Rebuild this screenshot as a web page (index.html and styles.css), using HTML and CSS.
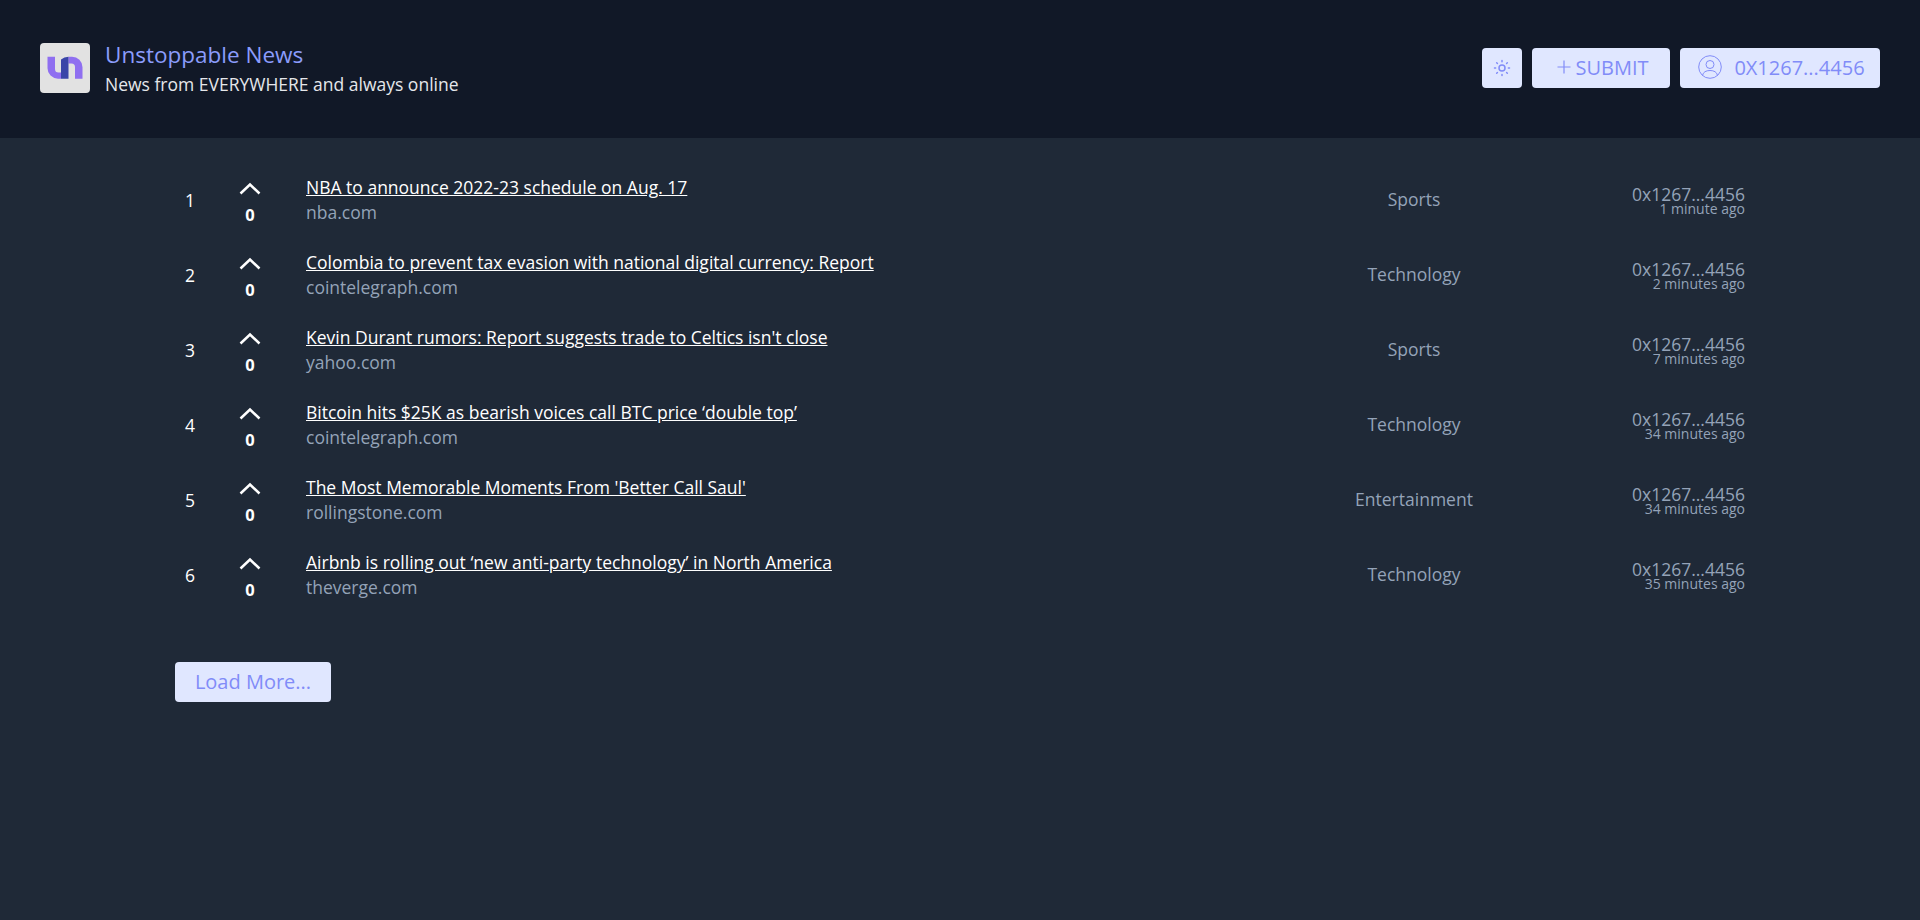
FILE: index.html

```html
<!DOCTYPE html>
<html lang="en">
<head>
	<meta charset="UTF-8" />
	<meta name="viewport" content="width=device-width, initial-scale=1.0" />
	<title>Unstoppable News</title>
	<link rel="stylesheet" href="styles.css">
</head>
<body>
	<!-- Header -->
	<header class="header">
		<div class="brand">
			<div class="logo">
				<svg width="36" height="24" viewBox="0 0 36 24">
					<path d="M.5 .7H8V13a3.500 3.500 0 0 0 3.500 3.500H14v6.200h-3A10.500 10.500 0 0 1 .5 12.200z" fill="#8f6ff0"/>
					<path d="M21.500 .7H25A10.500 10.500 0 0 1 35.500 11.200V22.700H28V11a3.500 3.500 0 0 0-3.500-3.500h-3z" fill="#8f6ff0"/>
					<path d="M14 3.500Q17 .7 21.500 .7V22.700H14z" fill="#3a45a8"/>
				</svg>
			</div>
			<div class="brand-text">
				<h1 class="brand-title">Unstoppable News</h1>
				<p class="brand-sub">News from EVERYWHERE and always online</p>
			</div>
		</div>
		<div class="actions">
			<button class="btn btn-theme" aria-label="Theme">
				<svg width="18" height="18" viewBox="0 0 24 24" fill="none" stroke="currentColor" stroke-width="2" stroke-linecap="round">
					<circle cx="12" cy="12" r="4"/>
					<path d="M12 2v1.500M12 20.500V22M2 12h1.500M20.500 12H22M4.900 4.900l1 1M18.100 18.100l1 1M4.900 19.100l1-1M18.100 5.900l1-1"/>
				</svg>
			</button>
			<button class="btn btn-submit">
				<svg width="16" height="16" viewBox="0 0 16 16" fill="none" stroke="currentColor" stroke-width="1.200"><path d="M8 1.500v13M1.500 8h13"/></svg>
				<span>SUBMIT</span>
			</button>
			<button class="btn btn-user">
				<svg width="24" height="24" viewBox="0 0 24 24" fill="none" stroke="currentColor" stroke-width="1"><circle cx="12" cy="12" r="11.300"/><circle cx="12" cy="9.500" r="4"/><path d="M4.500 20.500c.6-3.500 3.500-5 7.500-5s6.900 1.500 7.500 5"/></svg>
				<span>0X1267...4456</span>
			</button>
		</div>
	</header>
	<!-- End of Header -->

	<main class="content">
		<div class="list">
			<div class="row">
				<div class="rank">1</div>
				<div class="vote"><svg width="22" height="13" viewBox="0 0 22 13" fill="none" stroke="currentColor" stroke-width="2.500"><path d="M1.500 11.500 11 2.500l9.500 9"/></svg><b>0</b></div>
				<div class="story"><a href="#">NBA to announce 2022-23 schedule on Aug. 17</a><span>nba.com</span></div>
				<div class="category">Sports</div>
				<div class="author"><span>0x1267...4456</span><small>1 minute ago</small></div>
			</div>
			<div class="row">
				<div class="rank">2</div>
				<div class="vote"><svg width="22" height="13" viewBox="0 0 22 13" fill="none" stroke="currentColor" stroke-width="2.500"><path d="M1.500 11.500 11 2.500l9.500 9"/></svg><b>0</b></div>
				<div class="story"><a href="#">Colombia to prevent tax evasion with national digital currency: Report</a><span>cointelegraph.com</span></div>
				<div class="category">Technology</div>
				<div class="author"><span>0x1267...4456</span><small>2 minutes ago</small></div>
			</div>
			<div class="row">
				<div class="rank">3</div>
				<div class="vote"><svg width="22" height="13" viewBox="0 0 22 13" fill="none" stroke="currentColor" stroke-width="2.500"><path d="M1.500 11.500 11 2.500l9.500 9"/></svg><b>0</b></div>
				<div class="story"><a href="#">Kevin Durant rumors: Report suggests trade to Celtics isn't close</a><span>yahoo.com</span></div>
				<div class="category">Sports</div>
				<div class="author"><span>0x1267...4456</span><small>7 minutes ago</small></div>
			</div>
			<div class="row">
				<div class="rank">4</div>
				<div class="vote"><svg width="22" height="13" viewBox="0 0 22 13" fill="none" stroke="currentColor" stroke-width="2.500"><path d="M1.500 11.500 11 2.500l9.500 9"/></svg><b>0</b></div>
				<div class="story"><a href="#">Bitcoin hits $25K as bearish voices call BTC price ‘double top’</a><span>cointelegraph.com</span></div>
				<div class="category">Technology</div>
				<div class="author"><span>0x1267...4456</span><small>34 minutes ago</small></div>
			</div>
			<div class="row">
				<div class="rank">5</div>
				<div class="vote"><svg width="22" height="13" viewBox="0 0 22 13" fill="none" stroke="currentColor" stroke-width="2.500"><path d="M1.500 11.500 11 2.500l9.500 9"/></svg><b>0</b></div>
				<div class="story"><a href="#">The Most Memorable Moments From 'Better Call Saul'</a><span>rollingstone.com</span></div>
				<div class="category">Entertainment</div>
				<div class="author"><span>0x1267...4456</span><small>34 minutes ago</small></div>
			</div>
			<div class="row">
				<div class="rank">6</div>
				<div class="vote"><svg width="22" height="13" viewBox="0 0 22 13" fill="none" stroke="currentColor" stroke-width="2.500"><path d="M1.500 11.500 11 2.500l9.500 9"/></svg><b>0</b></div>
				<div class="story"><a href="#">Airbnb is rolling out ‘new anti-party technology’ in North America</a><span>theverge.com</span></div>
				<div class="category">Technology</div>
				<div class="author"><span>0x1267...4456</span><small>35 minutes ago</small></div>
			</div>
		</div>
		<button class="btn btn-more">Load More...</button>
	</main>
</body>
</html>
```

FILE: styles.css

```css
* {
	margin: 0;
	padding: 0;
	box-sizing: border-box;
}

body {
	background: #1f2937;
	color: #fff;
	font-family: "Open Sans", sans-serif;
	min-height: 920px;
}

.header {
	display: flex;
	align-items: center;
	justify-content: space-between;
	height: 138px;
	padding: 0 40px 2px;
	background: #111827;
}

.brand {
	display: flex;
	align-items: center;
	gap: 15px;
}

.logo {
	display: flex;
	align-items: center;
	justify-content: center;
	width: 50px;
	height: 50px;
	background: #e2e2e2;
	border-radius: 4px;
}

.brand-text {
	padding-top: 2px;
}

.brand-title {
	color: #8b9cfb;
	font-size: 22.500px;
	font-weight: 400;
	line-height: 28px;
}

.brand-sub {
	color: #e5e7eb;
	font-size: 17.500px;
	line-height: 26px;
	padding-top: 2px;
}

.actions {
	display: flex;
	gap: 10px;
}

.btn {
	display: flex;
	align-items: center;
	justify-content: center;
	height: 40px;
	padding-bottom: 2px;
	background: #e0e7ff;
	color: #818cf8;
	border: 0;
	border-radius: 4px;
	font-family: inherit;
	font-size: 20px;
}

.btn-theme {
	width: 40px;
	padding-bottom: 0;
}

.btn-submit {
	width: 138px;
	gap: 3px;
	padding-left: 3px;
}

.btn-user {
	width: 200px;
	gap: 12px;
	padding-left: 3px;
}

.content {
	padding: 25px 175px 0;
}

.row {
	display: grid;
	grid-template-columns: 30px 101px 989px 238px 1fr;
	align-items: center;
	height: 75px;
}

.rank {
	text-align: center;
	font-size: 17.500px;
	margin-bottom: 2px;
}

.vote {
	display: flex;
	flex-direction: column;
	align-items: center;
	gap: 10px;
	margin-left: -11px;
	padding-top: 6px;
	font-size: 16.500px;
}

.vote b {
	line-height: 20px;
}

.story {
	margin-bottom: 1px;
}

.story a {
	display: block;
	width: fit-content;
	color: #fff;
	font-size: 17.500px;
	line-height: 25px;
}

.story span {
	display: block;
	color: #94a3b8;
	font-size: 17.500px;
	line-height: 25px;
}

.category {
	color: #94a3b8;
	font-size: 17.500px;
	text-align: center;
	margin-bottom: 3px;
}

.author {
	display: flex;
	flex-direction: column;
	align-items: flex-end;
	color: #94a3b8;
	font-size: 17.500px;
	margin-bottom: 4px;
}

.author span {
	line-height: 20px;
}

.author small {
	font-size: 14px;
	line-height: 10px;
}

.btn-more {
	width: 156px;
	margin-top: 49px;
}
```
